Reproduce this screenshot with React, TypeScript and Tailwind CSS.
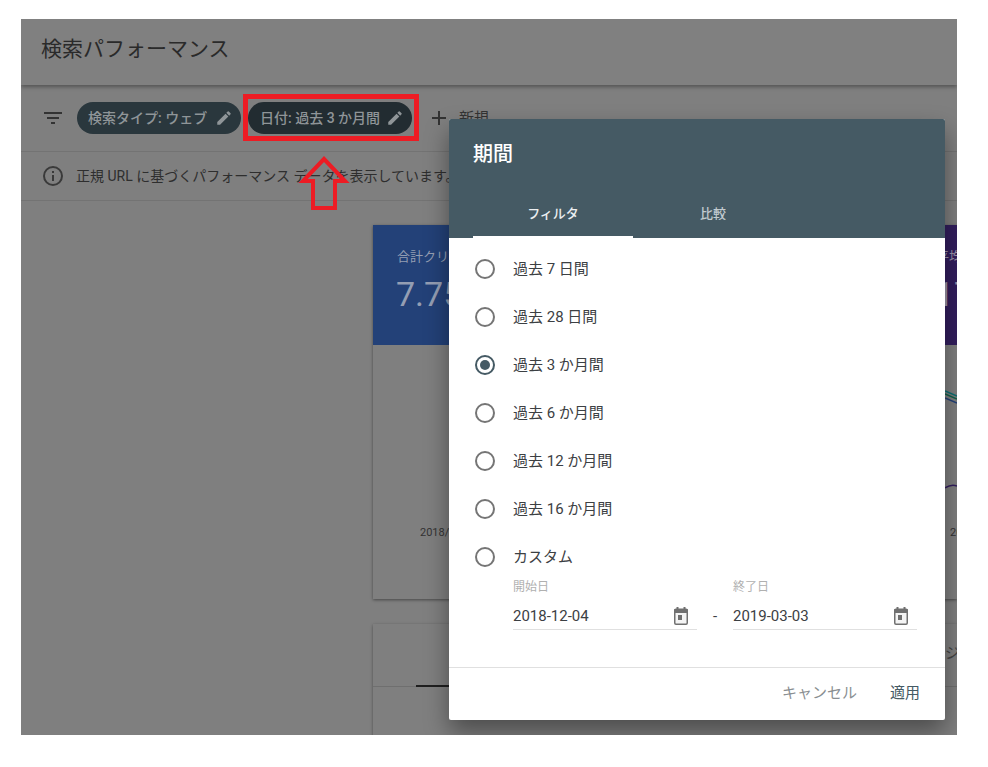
import React from "react";

function Pencil({ className }: { className?: string }) {
  return (
    <svg viewBox="0 0 24 24" className={className} fill="currentColor">
      <path d="M3 17.25V21h3.75L17.81 9.94l-3.75-3.75L3 17.25zM20.71 7.04a1 1 0 0 0 0-1.41l-2.34-2.34a1 1 0 0 0-1.41 0l-1.83 1.83 3.75 3.75 1.83-1.83z" />
    </svg>
  );
}

function Calendar() {
  return (
    <svg viewBox="0 0 14 18" className="h-[18px] w-[14px] text-[#707070]">
      <rect x="2.5" y="0" width="2" height="3" fill="currentColor" />
      <rect x="9.5" y="0" width="2" height="3" fill="currentColor" />
      <rect x="0.75" y="2.25" width="12.5" height="15" rx="1.2" fill="#f4f4f4" stroke="currentColor" strokeWidth="1.5" />
      <rect x="0" y="2" width="14" height="4" rx="1" fill="currentColor" />
      <rect x="4" y="8" width="4" height="5" fill="currentColor" />
    </svg>
  );
}

function Radio({ label, checked }: { label: string; checked?: boolean }) {
  return (
    <div className="flex h-[48px] items-center pl-[26px]">
      <span
        className={`flex h-[20px] w-[20px] items-center justify-center rounded-full border-2 ${
          checked ? "border-[#455a64]" : "border-[#757575]"
        }`}
      >
        {checked && <span className="h-[10px] w-[10px] rounded-full bg-[#455a64]" />}
      </span>
      <span className="ml-[18px] text-[15px] text-[#3c4043]">{label}</span>
    </div>
  );
}

function DateField({ label, value }: { label: string; value: string }) {
  return (
    <div className="w-[184px]">
      <div className="text-[12px] leading-[16px] text-[#b0b0b0]">{label}</div>
      <div className="mt-[8px] flex h-[27px] items-center justify-between border-b border-[#e0e0e0] pr-[9px] text-[15px] text-[#3c4043]">
        <span>{value}</span>
        <Calendar />
      </div>
    </div>
  );
}

export default function App() {
  return (
    <div
      className="h-[767px] w-[988px] overflow-hidden bg-white pl-[21px] pt-[19px]"
      style={{ fontFamily: 'Roboto, "Noto Sans CJK JP", sans-serif' }}
    >
      <div className="relative h-[716px] w-[936px] overflow-hidden bg-[#7f7f7f]">
        <header className="flex h-[66px] items-center bg-[#808080] pb-[4px] pl-[20px] text-[21px] text-[#2a2a2a] shadow-[0_2px_4px_rgba(0,0,0,0.35)]">
          検索パフォーマンス
        </header>

        <div className="flex h-[67px] items-center border-b border-[#737373] pl-[20px]">
          <svg viewBox="0 0 24 24" className="h-[24px] w-[24px] text-[#333]" fill="currentColor">
            <path d="M3 6h18v2H3zM6 11h12v2H6zM10 16h4v2h-4z" />
          </svg>
          <div className="ml-[12px] flex h-[32px] w-[164px] items-center justify-between rounded-full bg-[#2a373d] pl-[11px] pr-[8px] text-[14px] font-medium text-[#8f9598]">
            <span>検索タイプ: ウェブ</span>
            <Pencil className="h-[18px] w-[18px]" />
          </div>
          <div className="ml-[7px] flex h-[32px] w-[164px] items-center justify-between rounded-full bg-[#222c31] pl-[12px] pr-[8px] text-[14px] font-medium text-[#8f9598]">
            <span>日付: 過去 3 か月間</span>
            <Pencil className="h-[18px] w-[18px]" />
          </div>
          <svg viewBox="0 0 24 24" className="ml-[15px] h-[24px] w-[24px] text-[#333]" fill="currentColor">
            <path d="M11 5h2v6h6v2h-6v6h-2v-6H5v-2h6z" />
          </svg>
          <span className="ml-[8px] text-[15px] text-[#333]">新規</span>
        </div>

        <div className="flex h-[49px] items-center border-b border-[#737373] pl-[20px] text-[14px] text-[#2e2e2e]">
          <svg viewBox="0 0 24 24" className="h-[24px] w-[24px] text-[#3a3a3a]" fill="currentColor">
            <path d="M11 7h2v2h-2zm0 4h2v6h-2zm1-9a10 10 0 1 0 0 20 10 10 0 0 0 0-20zm0 18a8 8 0 1 1 0-16 8 8 0 0 1 0 16z" />
          </svg>
          <span className="ml-[11px] whitespace-nowrap">正規 URL に基づくパフォーマンス データを表示しています。</span>
        </div>

        <main className="ml-[352px] mt-[24px] w-[584px]">
          <section className="h-[374px] bg-[#7f7f7f] shadow-[0_1px_3px_rgba(0,0,0,0.45)]">
            <div className="flex h-[120px] justify-between">
              <div className="w-[144px] bg-[#234178] pl-[24px] pt-[23px] text-[#949eb3]">
                <div className="text-[13px] leading-[18px]">合計クリック数</div>
                <div className="-ml-[1px] mt-[6px] whitespace-nowrap text-[34px] font-normal leading-[44px]">7.75</div>
              </div>
              <div className="w-[45px] overflow-hidden bg-[#321e5d] pl-[24px] pt-[23px] text-[#9d95ac]">
                <div className="whitespace-nowrap text-[13px] leading-[18px]">平均掲載順位</div>
                <div className="-ml-[1px] mt-[6px] whitespace-nowrap text-[34px] font-normal leading-[44px]">17.1</div>
              </div>
            </div>
            <div className="relative h-[254px]">
              <span className="absolute left-[47px] top-[180px] text-[11px] text-[#333]">2018/</span>
              <span className="absolute left-[577px] top-[180px] text-[11px] text-[#333]">20</span>
              <svg className="absolute left-[572px] top-[40px] h-[110px] w-[12px]" viewBox="0 0 12 110" fill="none">
                <path d="M0 6 L12 11" stroke="#0c6e72" strokeWidth="1.5" />
                <path d="M0 9 L12 14" stroke="#11604a" strokeWidth="1.5" />
                <path d="M0 13 L12 18" stroke="#234178" strokeWidth="1.5" />
                <path d="M0 103 Q6 99 12 101" stroke="#321e5d" strokeWidth="1.5" />
              </svg>
            </div>
          </section>

          <section className="mt-[25px] h-[120px] bg-[#7f7f7f] shadow-[0_1px_3px_rgba(0,0,0,0.4)]">
            <div className="relative h-[63px] border-b border-[#6f6f6f]">
              <span className="absolute bottom-[-1px] left-[43px] h-[2px] w-[40px] bg-[#1f1f1f]" />
              <span className="absolute left-[572px] top-[18px] text-[15px] text-[#444]">ジ</span>
            </div>
          </section>
        </main>

        {/* dialog */}
        <div className="absolute left-[428px] top-[100px] flex h-[601px] w-[496px] flex-col rounded-[2px] bg-white shadow-[0_12px_24px_rgba(0,0,0,0.4)]">
          <div className="h-[119px] rounded-t-[2px] bg-[#455a64] text-white">
            <div className="pl-[24px] pt-[21px] text-[20px] font-medium leading-[28px]">期間</div>
            <div className="mt-[22px] flex pl-[24px] text-[13px] font-medium">
              <div className="flex h-[48px] w-[160px] items-start justify-center border-b-2 border-white pt-[14px] text-[#eceff1]">
                フィルタ
              </div>
              <div className="flex h-[48px] w-[160px] items-start justify-center pt-[14px] text-[#c2cbd0]">比較</div>
            </div>
          </div>

          <div className="pt-[7px]">
            <Radio label="過去 7 日間" />
            <Radio label="過去 28 日間" />
            <Radio label="過去 3 か月間" checked />
            <Radio label="過去 6 か月間" />
            <Radio label="過去 12 か月間" />
            <Radio label="過去 16 か月間" />
            <Radio label="カスタム" />
          </div>

          <div className="mt-[-2px] flex pl-[64px]">
            <DateField label="開始日" value="2018-12-04" />
            <span className="mt-[26px] w-[36px] text-center text-[15px] text-[#3c4043]">-</span>
            <DateField label="終了日" value="2019-03-03" />
          </div>

          <div className="mt-[37px] flex flex-1 items-center justify-end gap-[33px] border-t border-[#e0e0e0] pb-[2px] pr-[25px] text-[15px]">
            <span className="text-[#8a8f92]">キャンセル</span>
            <span className="text-[#455a64]">適用</span>
          </div>
        </div>

        {/* red annotation box */}
        <div className="absolute left-[222px] top-[75px] h-[47px] w-[176px] border-[5px] border-[#ed1c24]" />
        {/* red arrow */}
        <svg className="absolute left-[275px] top-[134px] h-[60px] w-[56px]" viewBox="0 0 56 60" fill="none">
          <path d="M28 6 L49 28 L39 28 L39 55 L17 55 L17 28 L7 28 Z" stroke="#ed1c24" strokeWidth="4" strokeLinejoin="miter" />
        </svg>
      </div>
    </div>
  );
}
